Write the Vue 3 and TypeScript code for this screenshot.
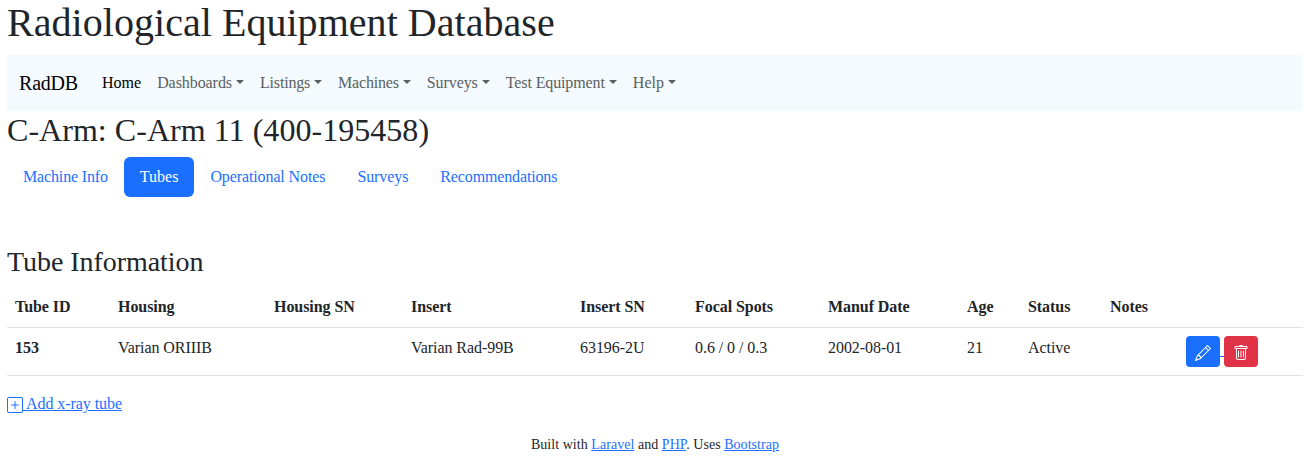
<script setup lang="ts">
interface Column {
  label: string
  width: number
}

interface NavEntry {
  label: string
  tracking: number
}

const menus: NavEntry[] = [
  { label: 'Dashboards', tracking: -0.07 },
  { label: 'Listings', tracking: -0.2 },
  { label: 'Machines', tracking: -0.2 },
  { label: 'Surveys', tracking: -0.09 },
  { label: 'Test Equipment', tracking: -0.12 },
  { label: 'Help', tracking: 0 },
]
const tabs: NavEntry[] = [
  { label: 'Machine Info', tracking: -0.15 },
  { label: 'Tubes', tracking: 0 },
  { label: 'Operational Notes', tracking: -0.11 },
  { label: 'Surveys', tracking: -0.09 },
  { label: 'Recommendations', tracking: -0.14 },
]
const activeTab = 'Tubes'

const columns: Column[] = [
  { label: 'Tube ID', width: 103 },
  { label: 'Housing', width: 156 },
  { label: 'Housing SN', width: 137 },
  { label: 'Insert', width: 169 },
  { label: 'Insert SN', width: 115 },
  { label: 'Focal Spots', width: 133 },
  { label: 'Manuf Date', width: 139 },
  { label: 'Age', width: 61 },
  { label: 'Status', width: 82 },
  { label: 'Notes', width: 76 },
  { label: '', width: 125 },
]

const cells: string[] = ['Varian ORIIIB', '', 'Varian Rad-99B', '63196-2U', '0.6 / 0 / 0.3', '2002-08-01', '21', 'Active', '']
</script>

<template>
  <div class="page">
    <h1>Radiological Equipment Database</h1>
    <nav class="navbar">
      <a class="brand" href="#">RadDB</a>
      <a class="nav-item current" href="#">Home</a>
      <a v-for="menu in menus" :key="menu.label" class="nav-item dropdown" :style="{ letterSpacing: menu.tracking + 'px' }" href="#">{{ menu.label }}</a>
    </nav>

    <h2>C-Arm: C-Arm 11 (400-195458)</h2>
    <div class="pills">
      <a v-for="tab in tabs" :key="tab.label" class="pill" :class="{ active: tab.label === activeTab }" :style="{ letterSpacing: tab.tracking + 'px' }" href="#">{{ tab.label }}</a>
    </div>

    <h3>Tube Information</h3>
    <table>
      <colgroup>
        <col v-for="col in columns" :key="col.label" :style="{ width: col.width + 'px' }" />
      </colgroup>
      <thead>
        <tr>
          <th v-for="col in columns" :key="col.label">{{ col.label }}</th>
        </tr>
      </thead>
      <tbody>
        <tr>
          <th>153</th>
          <td v-for="(cell, i) in cells" :key="i">{{ cell }}</td>
          <td class="actions">
            <a href="#"><button class="btn primary" type="button" aria-label="Edit"><svg width="16" height="16" fill="currentColor" viewBox="0 0 16 16"><path d="M12.146.146a.5.5 0 0 1 .708 0l3 3a.5.5 0 0 1 0 .708l-10 10a.5.5 0 0 1-.168.11l-5 2a.5.5 0 0 1-.65-.65l2-5a.5.5 0 0 1 .11-.168l10-10zM11.207 2.5 13.5 4.793 14.793 3.5 12.5 1.207 11.207 2.5zm1.586 3L10.5 3.207 4 9.707V10h.5a.5.5 0 0 1 .5.5v.5h.5a.5.5 0 0 1 .5.5v.5h.293l6.5-6.5zm-9.761 5.175-.106.106-1.528 3.821 3.821-1.528.106-.106A.5.5 0 0 1 5 12.5V12h-.5a.5.5 0 0 1-.5-.5V11h-.5a.5.5 0 0 1-.468-.325z" /></svg></button>{{ ' ' }}</a><button class="btn danger" type="button" aria-label="Delete"><svg width="16" height="16" fill="currentColor" viewBox="0 0 16 16"><path d="M5.5 5.5A.5.5 0 0 1 6 6v6a.5.5 0 0 1-1 0V6a.5.5 0 0 1 .5-.5zm2.5 0a.5.5 0 0 1 .5.5v6a.5.5 0 0 1-1 0V6a.5.5 0 0 1 .5-.5zm3 .5a.5.5 0 0 0-1 0v6a.5.5 0 0 0 1 0V6z" /><path fill-rule="evenodd" d="M14.5 3a1 1 0 0 1-1 1H13v9a2 2 0 0 1-2 2H5a2 2 0 0 1-2-2V4h-.5a1 1 0 0 1-1-1V2a1 1 0 0 1 1-1H6a1 1 0 0 1 1-1h2a1 1 0 0 1 1 1h3.500a1 1 0 0 1 1 1v1zM4.118 4 4 4.059V13a1 1 0 0 0 1 1h6a1 1 0 0 0 1-1V4.059L11.882 4H4.118zM2.500 3V2h11v1h-11z" /></svg></button>
          </td>
        </tr>
      </tbody>
    </table>

    <p class="add">
      <a class="link" href="#"><svg width="16" height="16" fill="currentColor" viewBox="0 0 16 16"><path d="M14 1a1 1 0 0 1 1 1v12a1 1 0 0 1-1 1H2a1 1 0 0 1-1-1V2a1 1 0 0 1 1-1h12zM2 0a2 2 0 0 0-2 2v12a2 2 0 0 0 2 2h12a2 2 0 0 0 2-2V2a2 2 0 0 0-2-2H2z" /><path d="M8 4a.5.5 0 0 1 .5.5v3h3a.5.5 0 0 1 0 1h-3v3a.5.5 0 0 1-1 0v-3h-3a.5.5 0 0 1 0-1h3v-3A.5.5 0 0 1 8 4z" /></svg> Add x-ray tube</a>
    </p>
    <footer>
      Built with <a class="link" href="#">Laravel</a> and <a class="link" href="#">PHP</a>. Uses <a class="link" href="#">Bootstrap</a>
    </footer>
  </div>
</template>

<style>
body {
  background: #fff;
}
</style>

<style scoped>
.page,
.page * {
  box-sizing: border-box;
}
.page {
  width: 1308px;
  margin-top: -1px;
  padding: 0 5px 0 7px;
  font: 16px/1.5 "Liberation Serif", "Times New Roman", serif;
  color: #212529;
}
h1,
h2,
h3 {
  margin: 0 0 8px;
  font-weight: 500;
  line-height: 1.2;
}
h1 {
  font-size: 40px;
  letter-spacing: 0.04px;
}
h2 {
  font-size: 32px;
  letter-spacing: 0.04px;
}
h3 {
  font-size: 28px;
  letter-spacing: -0.06px;
}
a {
  color: #1a6fff;
}
.navbar {
  display: flex;
  align-items: center;
  height: 56px;
  padding: 8px 12px;
  background: #f4fafe;
}
.brand {
  margin-right: 16px;
  font-size: 20px;
  letter-spacing: -0.2px;
  color: #000;
  text-decoration: none;
}
.nav-item {
  padding: 8px;
  color: #5b5f61;
  text-decoration: none;
}
.nav-item.current {
  color: #000;
}
.dropdown::after {
  content: "";
  display: inline-block;
  margin-left: 0.255em;
  vertical-align: 0.255em;
  border-top: 0.3em solid;
  border-right: 0.3em solid transparent;
  border-left: 0.3em solid transparent;
}
.pills {
  display: flex;
  margin-bottom: 48px;
}
.pill {
  padding: 8px 16px;
  border-radius: 6px;
  text-decoration: none;
}
.pill.active {
  background: #1a6fff;
  color: #fff;
}
table {
  width: 1296px;
  margin-bottom: 16px;
  table-layout: fixed;
  border-collapse: collapse;
}
th,
td {
  padding: 8px;
  border-bottom: 1px solid #dee2e6;
  letter-spacing: -0.06px;
  text-align: left;
  vertical-align: top;
}
.actions {
  letter-spacing: 0;
  white-space: nowrap;
}
svg {
  vertical-align: middle;
}
.btn {
  display: inline-block;
  margin: 0;
  padding: 4px 8px;
  border: 1px solid transparent;
  border-radius: 4px;
  font: 14px/1.5 "Liberation Serif", "Times New Roman", serif;
  color: #fff;
  vertical-align: middle;
}
.primary {
  background: #1a6fff;
}
.danger {
  background: #e03347;
}
.add {
  margin: 0 0 18px;
  letter-spacing: -0.07px;
}
footer {
  font-size: 14px;
  letter-spacing: 0.045px;
  text-align: center;
}
</style>
